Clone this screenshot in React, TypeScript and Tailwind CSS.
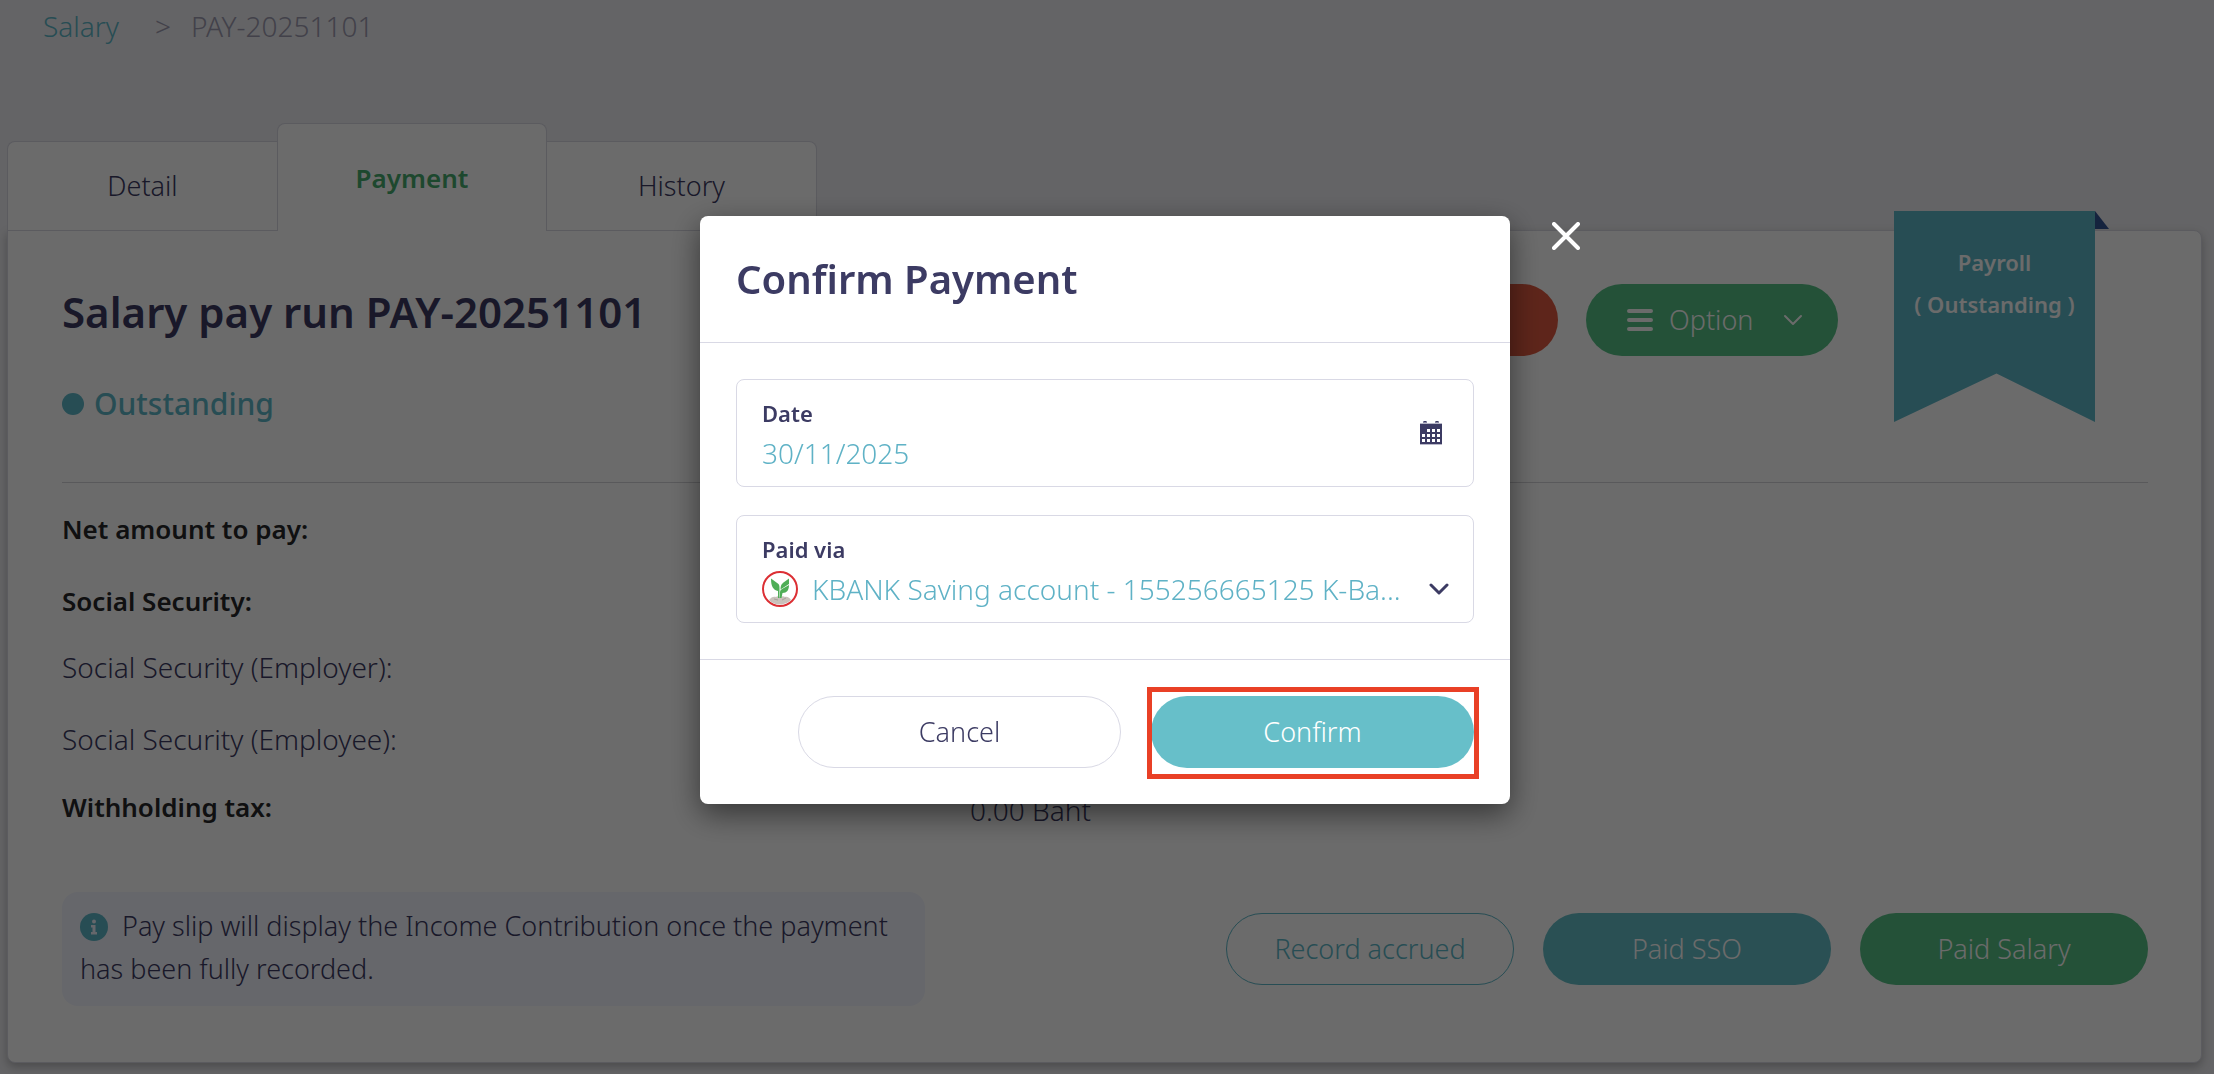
import React, { useState } from "react";

const tabs = ["Detail", "Payment", "History"];

const rows = [
  { label: "Net amount to pay:", bold: true, gap: "mb-8" },
  { label: "Social Security:", bold: true, gap: "mb-[26px]" },
  { label: "Social Security (Employer):", bold: false, gap: "mb-8" },
  { label: "Social Security (Employee):", bold: false, gap: "mb-7" },
  { label: "Withholding tax:", bold: true, value: "0.00 Baht", gap: "" }
];

const ChevronDown = ({ className }: { className: string }) => (
  <svg viewBox="0 0 20 12" className={className} fill="none" stroke="currentColor" strokeLinecap="round" strokeLinejoin="round">
    <path d="M2 2l8 8 8-8" />
  </svg>
);

const CalendarIcon = () => (
  <svg viewBox="0 0 22 24" className="w-[22px] h-6" shapeRendering="crispEdges">
    <rect x="3" y="0" width="4" height="2" fill="#8b8aa5" />
    <rect x="15" y="0" width="4" height="2" fill="#8b8aa5" />
    <rect x="4" y="0" width="2" height="1" fill="#3c3b63" />
    <rect x="16" y="0" width="2" height="1" fill="#3c3b63" />
    <rect x="0" y="2" width="22" height="22" fill="#b9b9c9" />
    <rect x="0" y="3" width="22" height="20" fill="#3c3b63" />
    <g fill="#fff">
      {[7, 12, 17].map((x) => (
        <rect key={x} x={x} y="8" width="3" height="3" />
      ))}
      {[2, 7, 12, 17].map((x) => (
        <rect key={x} x={x} y="13" width="3" height="3" />
      ))}
      {[2, 7, 12, 17].map((x) => (
        <rect key={x} x={x} y="18" width="3" height="3" />
      ))}
    </g>
  </svg>
);

const BankLogo = () => (
  <svg viewBox="0 0 36 36" className="w-9 h-9 shrink-0">
    <circle cx="18" cy="18" r="17" fill="#fff" stroke="#dc2f34" strokeWidth="2" />
    <path d="M7 29c2-3 5-4 7-3 1-1 3-1 4 0 2-1 4-1 5 0 2-1 5 1 6 3-2 2-6 4.500-11 4.500S9 31.500 7 29z" fill="#c9c1bb" />
    <path d="M12 28l4 1M20 29l4-2" stroke="#a8a09a" strokeWidth="1" />
    <path d="M9 7.500l7.500 5.500c1 1 1 3 1 5v9H16v-7c-5-1-7-5-7-12.500z" fill="#4fae57" />
    <path d="M27 7.500v5.500l-8.500 5.500c0-4 1-5.500 3-7z" fill="#4fae57" />
    <path d="M27 14c0 5-2 8-6.500 8l-1 5H18v-5.500c0-1.500.5-2.500 2-3.500z" fill="#4fae57" />
  </svg>
);

const App = () => {
  const [activeTab, setActiveTab] = useState("Payment");
  const [date, setDate] = useState("30/11/2025");

  return (
    <div className="min-h-screen bg-[#eeeef2] font-['Noto_Sans',sans-serif] font-light text-[27px] leading-10 text-[#3c3b63]">
      <div className="pl-[7px] pr-3 pt-1.5 pb-3">
        <nav className="flex pl-9 mb-[77px] text-[28px] text-[#9d9bb0]">
          <a href="#salary" className="text-[#5db7c8]">
            Salary
          </a>
          <span className="mx-5 pl-4">&gt;</span>
          <span>PAY-20251101</span>
        </nav>

        <div className="relative z-10 flex items-end -mb-px">
          {tabs.map((tab) => (
            <button
              key={tab}
              onClick={() => setActiveTab(tab)}
              className={
                activeTab === tab
                  ? "w-[270px] h-[108px] bg-white border border-b-0 border-[#d8d8e2] rounded-t-lg font-semibold text-[26px] text-[#47ab6e]"
                  : "w-[270px] h-[90px] bg-white border border-[#d8d8e2] first:rounded-tl-lg last:rounded-tr-lg first:border-r-0 last:border-l-0"
              }
            >
              {tab}
            </button>
          ))}
        </div>

        <main className="relative bg-white border border-[#d8d8e2] rounded-b-lg rounded-tr-lg pl-[54px] pr-[53px] pt-[53px] pb-14 shadow-[0_4px_10px_rgba(0,0,0,0.25)]">
          <div className="flex justify-between items-start pb-[58px] border-b border-[#d4d4d8]">
            <div>
              <h1 className="font-semibold text-[42px] leading-[56px] mb-11">Salary pay run PAY-20251101</h1>
              <p className="flex items-center gap-2.5 font-medium text-[30px] leading-10 text-[#5db7c8]">
                <span className="w-[22px] h-[22px] rounded-full bg-[#5db7c8]" />
                Outstanding
              </p>
            </div>
            <div className="flex gap-7 mr-[310px]">
              <button aria-label="Void" className="w-[252px] h-[72px] rounded-full bg-[#e05a40]" />
              <button className="flex items-center w-[252px] h-[72px] pl-[41px] rounded-full bg-[#56c185] text-white">
                <svg viewBox="0 0 26 24" className="w-[26px] h-6 mr-4" stroke="currentColor" strokeWidth="4" strokeLinecap="round">
                  <path d="M2 3h22M2 12h22M2 21h22" />
                </svg>
                Option
                <ChevronDown className="w-5 h-3 ml-[30px] stroke-2" />
              </button>
            </div>
          </div>

          {/* status ribbon */}
          <div className="absolute -top-5 right-[92px] flex">
            <div className="w-[201px] h-[211px] pt-[30px] bg-[#5db7c8] text-center text-white font-semibold text-[22px] leading-[42px] [clip-path:polygon(0_0,100%_0,100%_100%,51%_77%,0_100%)]">
              Payroll
              <br />( Outstanding )
            </div>
            <div className="w-3.5 h-[18px] bg-[#345394] [clip-path:polygon(0_0,100%_100%,0_100%)]" />
          </div>

          <dl className="pt-[26px] mb-[65px] text-[28px]">
            {rows.map((row) => (
              <div key={row.label} className={`flex ${row.gap}`}>
                <dt className={row.bold ? "w-[908px] font-semibold text-[26px] text-[#26282a]" : "w-[908px]"}>{row.label}</dt>
                <dd className="leading-[46px] -mb-1.5">{row.value}</dd>
              </div>
            ))}
          </dl>

          <div className="flex items-center justify-between">
            <p className="w-[863px] pl-[18px] pr-2 pt-3 pb-4 rounded-2xl bg-[#f3f5ff] leading-[43px]">
              <svg viewBox="0 0 28 28" className="inline w-7 h-7 mr-3.5 -mt-1">
                <circle cx="14" cy="14" r="14" fill="#5db7c8" />
                <circle cx="14" cy="8.500" r="2" fill="#f3f5ff" />
                <path d="M11 12h4.500v7H17v2.500h-6V19h1.500v-4.500H11z" fill="#f3f5ff" />
              </svg>
              Pay slip will display the Income Contribution once the payment has been fully recorded.
            </p>
            <div className="flex gap-[29px]">
              <button className="w-72 h-[72px] rounded-full border border-[#5db7c8] text-[#5db7c8]">Record accrued</button>
              <button className="w-72 h-[72px] rounded-full bg-[#64bec8] text-white">Paid SSO</button>
              <button className="w-72 h-[72px] rounded-full bg-[#56c185] text-white">Paid Salary</button>
            </div>
          </div>
        </main>
      </div>

      <div className="fixed inset-0 z-20 flex items-start justify-center pt-[216px] pr-1 bg-black/58">
        <div role="dialog" aria-labelledby="dialog-title" className="relative w-[810px] bg-white rounded-lg shadow-[0_10px_30px_rgba(0,0,0,0.5)]">
          <button aria-label="Close" className="absolute top-1.5 -right-[70px] text-white">
            <svg viewBox="0 0 28 28" className="w-7 h-7" stroke="currentColor" strokeWidth="4" strokeLinecap="round">
              <path d="M2 2l24 24M26 2L2 26" />
            </svg>
          </button>

          <div className="px-9 py-[35px] border-b border-[#d9d9e5]">
            <h2 id="dialog-title" className="font-semibold text-[40px] leading-[56px]">
              Confirm Payment
            </h2>
          </div>

          <div className="flex flex-col gap-7 p-9">
            <div className="flex items-center justify-between h-[108px] pl-[25px] pr-[31px] border border-[#d9d9e5] rounded-lg">
              <div className="pt-1">
                <label htmlFor="date" className="block font-semibold text-[22px] leading-8 mb-1">
                  Date
                </label>
                <input
                  id="date"
                  type="text"
                  value={date}
                  onChange={(e) => setDate(e.target.value)}
                  className="block w-[400px] h-10 text-[28px] text-[#5fb2c6] outline-none"
                />
              </div>
              <CalendarIcon />
            </div>

            <div className="flex flex-col justify-center h-[108px] pt-1 pl-[25px] pr-6 border border-[#d9d9e5] rounded-lg">
              <label htmlFor="paid-via" className="block font-semibold text-[22px] leading-8 mb-1">
                Paid via
              </label>
              <div className="flex items-center">
                <BankLogo />
                <select id="paid-via" className="flex-1 min-w-0 h-10 ml-3.5 appearance-none bg-transparent text-[28px] text-[#5fb2c6] outline-none">
                  <option>KBANK Saving account - 155256665125 K-Ba...</option>
                </select>
                <ChevronDown className="w-5 h-3 stroke-[3] pointer-events-none" />
              </div>
            </div>
          </div>

          <div className="flex justify-end gap-[30px] p-9 border-t border-[#d9d9e5]">
            <button className="w-[323px] h-[72px] rounded-full border border-[#d9d9e5]">Cancel</button>
            <div className="relative">
              <button className="w-[323px] h-[72px] rounded-full bg-[#67bfc9] text-white">Confirm</button>
              <div className="absolute -left-1 -right-[5px] -top-[9px] -bottom-[11px] border-[5px] border-[#e94026] pointer-events-none" />
            </div>
          </div>
        </div>
      </div>
    </div>
  );
};

export default App;
